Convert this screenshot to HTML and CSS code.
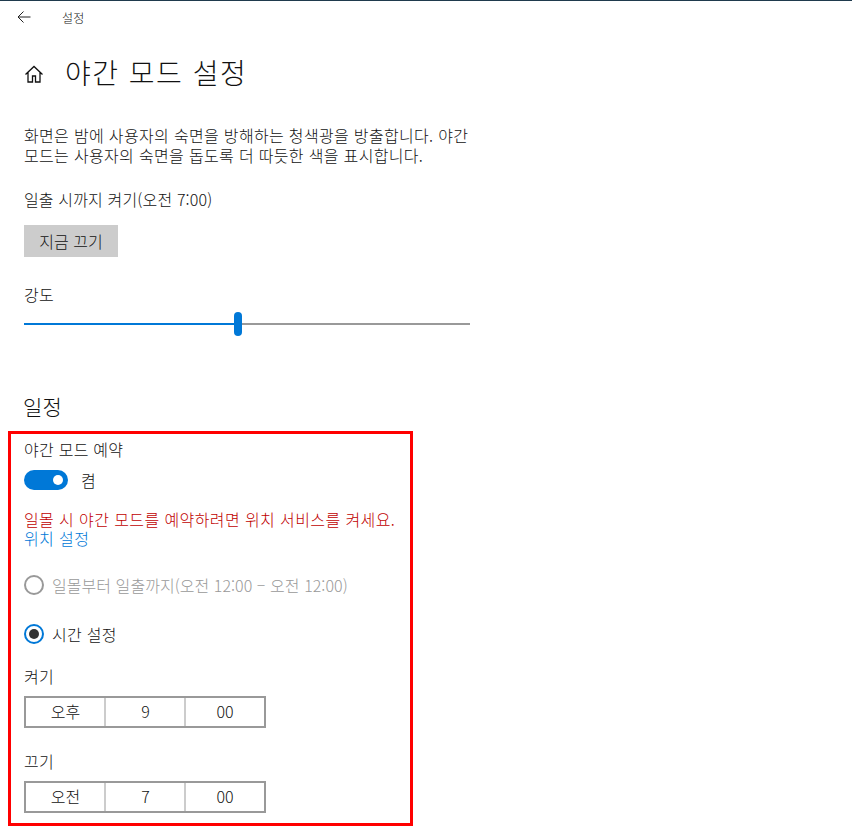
FILE: index.html
```html
<!DOCTYPE html>
<html lang="ko">
<head>
  <meta charset="UTF-8">
  <title>설정</title>
  <link rel="stylesheet" href="styles.css">
</head>
<body>

  <div class="topbar">
    <svg class="back-icon" width="16" height="16" viewBox="0 0 16 16"><path d="M14.5 8H2M7.5 2.5L2 8l5.5 5.5" fill="none" stroke="#222" stroke-width="1"/></svg>
    <span class="topbar-title">설정</span>
  </div>

  <div class="page-head">
    <svg class="home-icon" width="20" height="20" viewBox="0 0 20 20"><path d="M1.500 10.500L10 2.500l8.500 8M4 8.500V18h4.500v-6h3v6H16V8.500" fill="none" stroke="#111" stroke-width="1.300"/></svg>
    <h1>야간 모드 설정</h1>
  </div>

  <div class="content">
    <p class="desc">화면은 밤에 사용자의 숙면을 방해하는 청색광을 방출합니다. 야간 모드는 사용자의 숙면을 돕도록 더 따듯한 색을 표시합니다.</p>
    <p class="status">일출 시까지 켜기(오전 7:00)</p>
    <button class="off-btn">지금 끄기</button>

    <div class="label strength">강도</div>
    <div class="slider">
      <div class="slider-fill"></div>
      <div class="slider-thumb"></div>
      <div class="slider-rest"></div>
    </div>

    <h2>일정</h2>
  </div>

  <div class="highlight">
    <div class="label">야간 모드 예약</div>
    <div class="toggle-row">
      <div class="toggle"><div class="toggle-knob"></div></div>
      <span>켬</span>
    </div>

    <p class="warning">일몰 시 야간 모드를 예약하려면 위치 서비스를 켜세요.<br><a class="link">위치 설정</a></p>

    <div class="radio-row disabled">
      <div class="radio"></div>
      <span>일몰부터 일출까지(오전 12:00 – 오전 12:00)</span>
    </div>
    <div class="radio-row selected">
      <div class="radio"><div class="radio-dot"></div></div>
      <span>시간 설정</span>
    </div>

    <div class="label time-label">켜기</div>
    <div class="time-picker">
      <div>오후</div>
      <div>9</div>
      <div>00</div>
    </div>

    <div class="label time-label second">끄기</div>
    <div class="time-picker">
      <div>오전</div>
      <div>7</div>
      <div>00</div>
    </div>
  </div>

</body>
</html>
```

FILE: styles.css
```css
* {
  box-sizing: border-box;
}

body {
  margin: 0;
  background: white;
  color: #111;
  font-family: "Noto Sans CJK KR", "Noto Sans", sans-serif;
  font-size: 16px;
  font-weight: 300;
  line-height: 20px;
  letter-spacing: 0.25px;
  border-top: 1px solid #1f3a4d;
}

.topbar {
  display: flex;
  align-items: center;
  height: 34px;
  padding-left: 16px;
}

.back-icon {
  margin-top: -2px;
}

.topbar-title {
  margin-left: 30px;
  font-size: 12px;
}

.page-head {
  display: flex;
  align-items: center;
  height: 40px;
  margin-top: 17px;
  padding-left: 24px;
}

.home-icon {
  margin-top: 3px;
}

h1 {
  margin: 0 0 0 21px;
  font-size: 28px;
  font-weight: 300;
  letter-spacing: 1.5px;
}

.content {
  width: 470px;
  padding-left: 24px;
}

.desc {
  margin: 33px 0 0;
  letter-spacing: 0.33px;
}

.status {
  margin: 24px 0 0;
  letter-spacing: 0.15px;
}

.off-btn {
  display: block;
  width: 94px;
  height: 32px;
  margin-top: 16px;
  border: none;
  background: #cccccc;
  color: #111;
  font: inherit;
}

.strength {
  margin-top: 27px;
}

.slider {
  display: flex;
  align-items: center;
  height: 24px;
  margin-top: 8px;
}

.slider-fill {
  width: 210px;
  height: 2px;
  background: #0078d7;
}

.slider-thumb {
  width: 8px;
  height: 24px;
  border-radius: 4px;
  background: #0078d7;
}

.slider-rest {
  flex: 1;
  height: 2px;
  background: #999;
}

h2 {
  margin: 56px 0 0 -1px;
  font-size: 21px;
  line-height: 28px;
  font-weight: 300;
}

.highlight {
  width: 405px;
  height: 395px;
  margin: 11px 0 0 8px;
  padding: 5px 0 0 13px;
  border: 3px solid #ff0000;
}

.toggle-row {
  display: flex;
  align-items: center;
  gap: 13px;
  height: 20px;
  margin-top: 11px;
  line-height: 18px;
}

.toggle {
  display: flex;
  align-items: center;
  justify-content: flex-end;
  width: 44px;
  height: 20px;
  padding-right: 5px;
  border-radius: 10px;
  background: #0078d7;
}

.toggle-knob {
  width: 10px;
  height: 10px;
  border-radius: 50%;
  background: white;
}

.warning {
  margin: 20px 0 0;
  color: #c00000;
  letter-spacing: 0.4px;
  line-height: 19px;
}

.link {
  color: #0078d7;
}

.radio-row {
  display: flex;
  align-items: center;
  gap: 8px;
  height: 20px;
}

.radio-row.disabled {
  margin-top: 27px;
  color: #999;
  letter-spacing: 0.05px;
}

.radio-row.selected {
  margin-top: 29px;
}

.radio {
  display: flex;
  align-items: center;
  justify-content: center;
  width: 20px;
  height: 20px;
  border: 2px solid #999;
  border-radius: 50%;
}

.selected .radio {
  border-color: #0078d7;
}

.radio-dot {
  width: 10px;
  height: 10px;
  border-radius: 50%;
  background: #333;
}

.time-label {
  margin-top: 22px;
}

.time-label.second {
  margin-top: 23px;
}

.time-picker {
  display: grid;
  grid-template-columns: 79px 80px 79px;
  width: 242px;
  height: 32px;
  margin-top: 10px;
  border: 2px solid #999;
  text-align: center;
  line-height: 26px;
  letter-spacing: 0;
}

.time-picker div + div {
  margin-left: -1px;
  border-left: 2px solid #ccc;
}
```
